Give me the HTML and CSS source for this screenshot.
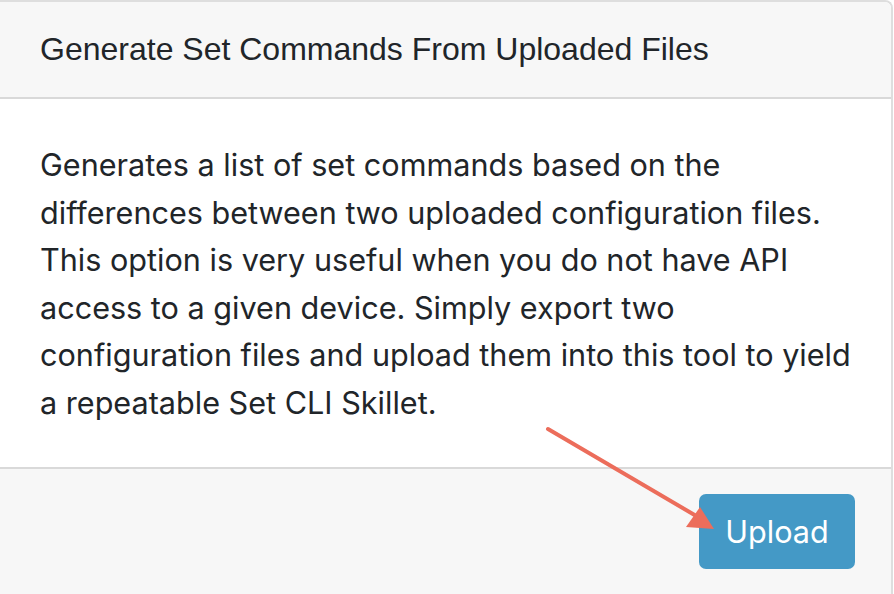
FILE: index.html
```html
<!DOCTYPE html>
<html>
<head>
<meta charset="utf-8">
<link rel="stylesheet" href="styles.css">
</head>
<body>
<div class="card">
  <div class="card-header">Generate Set Commands From Uploaded Files</div>
  <div class="card-body">
    <p>Generates a list of set commands based on the<br>differences between two uploaded configuration files.<br>This option is very useful when you do not have API<br>access to a given device. Simply export two<br>configuration files and upload them into this tool to yield<br>a repeatable Set CLI Skillet.</p>
  </div>
  <div class="card-footer">
    <button class="btn">Upload</button>
  </div>
  <svg class="arrow" width="894" height="594" viewBox="0 0 894 594">
    <line x1="548" y1="429" x2="698" y2="517" stroke="#ec6d5b" stroke-width="4" stroke-linecap="round"/>
    <polygon points="686,527 700,507 714,529" fill="#ec6d5b"/>
  </svg>
</div>
</body>
</html>
```
FILE: styles.css
```css
html, body {
  margin: 0;
  padding: 0;
  background: #ffffff;
}
body {
  font-family: Inter, "Liberation Sans", Arial, sans-serif;
  color: #212529;
}
.card {
  position: relative;
  width: 893px;
  height: 594px;
  border-top: 2px solid #dedede;
  border-right: 2px solid #dedede;
  border-top-right-radius: 8px;
  box-sizing: border-box;
  display: flex;
  flex-direction: column;
  overflow: hidden;
}
.card-header {
  background: #f7f7f7;
  height: 95px;
  border-bottom: 2px solid #d9d9d9;
  box-sizing: content-box;
  display: flex;
  align-items: center;
  padding-left: 40px;
  font-family: "Liberation Sans", Arial, sans-serif;
  font-size: 32px;
}
.card-body {
  background: #ffffff;
  height: 368px;
  padding: 0 40px;
  box-sizing: border-box;
}
.card-body p {
  margin: 0;
  padding-top: 42px;
  font-size: 30.6px;
  line-height: 47.5px;
  white-space: nowrap;
}
.card-footer {
  flex: 1;
  background: #f7f7f7;
  border-top: 2px solid #d9d9d9;
  display: flex;
  justify-content: flex-end;
  align-items: flex-start;
  padding: 25px 36px 0 0;
}
.btn {
  width: 156px;
  height: 75px;
  border: none;
  border-radius: 7px;
  background: #4499c6;
  color: #ffffff;
  font-family: Inter, "Liberation Sans", Arial, sans-serif;
  font-size: 30.6px;
  padding: 0;
}
.arrow {
  position: absolute;
  left: 0;
  top: -2px;
  pointer-events: none;
}
```
